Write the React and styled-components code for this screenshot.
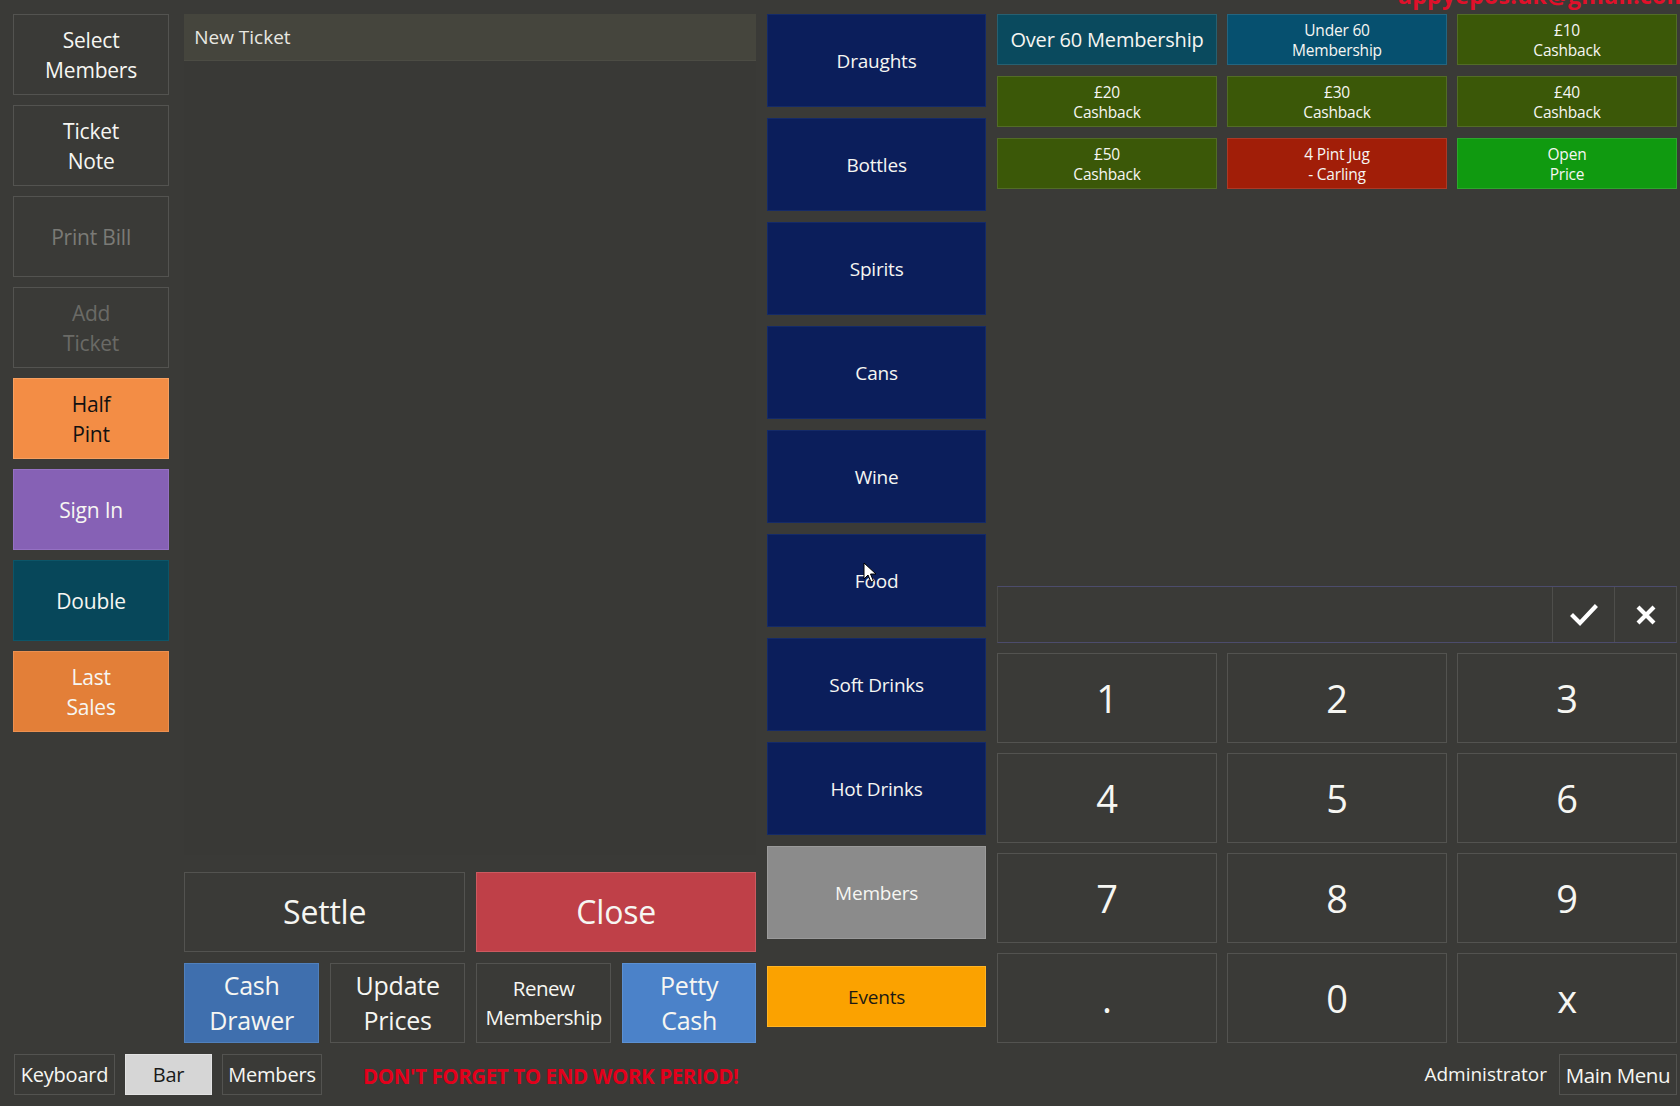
import React from "react";
import styled, { createGlobalStyle } from "styled-components";

const Global = createGlobalStyle`
  html, body { margin: 0; padding: 0; background: #3a3a37; }
  body { font-family: "Open Sans", "Noto Sans", sans-serif; }
  * { box-sizing: border-box; }
`;

const Page = styled.div`
  position: relative;
  width: 1680px;
  height: 1106px;
  overflow: hidden;
  background: #3a3a37;
  color: #f6f6f2;
  padding: 14px 3px 0 13px;
  display: flex;
  flex-direction: column;
`;

const Main = styled.div`
  display: flex;
  gap: 11px;
  height: 1029px;
`;

const Btn = styled.div`
  display: flex;
  align-items: center;
  justify-content: center;
  text-align: center;
  background: ${(p) => p.$bg || "#3a3a37"};
  color: ${(p) => p.$fg || "#f6f6f2"};
  border: 1px solid ${(p) => p.$bd || "rgba(255,255,255,0.13)"};
  font-size: ${(p) => p.$fs || 21}px;
  line-height: ${(p) => p.$lh || 30}px;
  height: ${(p) => (p.$h ? p.$h + "px" : "auto")};
  white-space: pre-line;
  letter-spacing: ${(p) => (p.$ls !== undefined ? p.$ls : -0.2)}px;
`;

const LeftCol = styled.div`
  width: 157px;
  margin-right: 4px;
  display: flex;
  flex-direction: column;
  gap: 10px;
`;

const TicketCol = styled.div`
  width: 572px;
  display: flex;
  flex-direction: column;
`;

const TicketHeader = styled.div`
  height: 47px;
  background: #45453d;
  border-bottom: 1px solid #4c4c44;
  padding: 0 0 0 10px;
  display: flex;
  align-items: center;
  font-size: 19px;
  color: #e8e8e2;
`;

const TicketBody = styled.div`
  flex: 1;
  background: #393936;
  margin-bottom: 17px;
`;

const ActionRow = styled.div`
  display: grid;
  grid-template-columns: ${(p) => p.$cols};
  gap: 11px;
  height: 80px;
  margin-top: ${(p) => p.$mt || 0}px;
`;

const CatCol = styled.div`
  width: 220px;
  display: flex;
  flex-direction: column;
  gap: 11px;
`;

const RightCol = styled.div`
  width: 681px;
  display: flex;
  flex-direction: column;
`;

const ProductGrid = styled.div`
  display: grid;
  grid-template-columns: repeat(3, 220px);
  grid-auto-rows: 51px;
  column-gap: 10px;
  row-gap: 11px;
`;

const InputBar = styled.div`
  margin-top: 397px;
  height: 57px;
  display: flex;
  border-top: 1px solid #4c4c6c;
  border-bottom: 1px solid #4c4c6c;
  border-left: 1px solid rgba(255, 255, 255, 0.08);
  border-right: 1px solid rgba(255, 255, 255, 0.1);
`;

const InputField = styled.div`
  flex: 1;
`;

const IconCell = styled.div`
  width: 62px;
  display: flex;
  align-items: center;
  justify-content: center;
  border-left: 1px solid rgba(255, 255, 255, 0.1);
`;

const Keypad = styled.div`
  margin-top: 10px;
  display: grid;
  grid-template-columns: repeat(3, 220px);
  grid-auto-rows: 90px;
  column-gap: 10px;
  row-gap: 10px;
`;

const Bottom = styled.div`
  margin-top: 11px;
  height: 41px;
  display: flex;
  align-items: stretch;
  gap: 10px;
  padding-left: 1px;
`;

const TabBtn = styled(Btn)`
  font-size: ${(p) => p.$fs || 20}px;
  padding: 0;
  width: ${(p) => p.$w}px;
  white-space: nowrap;
`;

const Warning = styled.div`
  margin-left: 31px;
  display: flex;
  align-items: center;
  color: #e3001b;
  font-weight: 700;
  font-size: 20.5px;
  letter-spacing: -0.4px;
  padding-top: 2px;
  font-family: "Open Sans", sans-serif;
`;

const Spacer = styled.div`
  flex: 1;
`;

const UserName = styled.div`
  display: flex;
  align-items: center;
  font-size: 19px;
  margin-right: 2px;
  padding-bottom: 2px;
`;

const TopNote = styled.div`
  position: absolute;
  top: -16px;
  left: 1398px;
  color: #e0102a;
  font-weight: 700;
  font-size: 23px;
  line-height: 23px;
  letter-spacing: 0.3px;
  white-space: nowrap;
`;

const Cursor = styled.svg`
  position: absolute;
  left: 863px;
  top: 562px;
`;

const leftButtons = [
  { t: "Select\nMembers" },
  { t: "Ticket\nNote" },
  { t: "Print Bill", fg: "#7a7a76" },
  { t: "Add\nTicket", fg: "#6a6a66" },
  { t: "Half\nPint", bg: "#f38d45", fg: "#111", bd: "#f7a060" },
  { t: "Sign In", bg: "#8661b5", bd: "#9571c3" },
  { t: "Double", bg: "#07475a", bd: "#0c5568" },
  { t: "Last\nSales", bg: "#e37f38", bd: "#ec9050" },
];

const categories = [
  "Draughts",
  "Bottles",
  "Spirits",
  "Cans",
  "Wine",
  "Food",
  "Soft Drinks",
  "Hot Drinks",
];

const products = [
  { t: "Over 60 Membership", bg: "#0a4a5e", fs: 20, lh: 26 },
  { t: "Under 60\nMembership", bg: "#06506f" },
  { t: "£10\nCashback", bg: "#3b5808" },
  { t: "£20\nCashback", bg: "#3b5808" },
  { t: "£30\nCashback", bg: "#3b5808" },
  { t: "£40\nCashback", bg: "#3b5808" },
  { t: "£50\nCashback", bg: "#3b5808" },
  { t: "4 Pint Jug\n- Carling", bg: "#a11e08" },
  { t: "Open\nPrice", bg: "#109a10" },
];

const keys = ["1", "2", "3", "4", "5", "6", "7", "8", "9", ".", "0", "x"];

export default function App() {
  return (
    <Page>
      <Global />
      <TopNote>appyepos.uk@gmail.com</TopNote>
      <Main>
        <LeftCol>
          {leftButtons.map((b) => (
            <Btn key={b.t} $h={81} $bg={b.bg} $fg={b.fg} $bd={b.bd}>
              {b.t}
            </Btn>
          ))}
        </LeftCol>

        <TicketCol>
          <TicketHeader>New Ticket</TicketHeader>
          <TicketBody />
          <ActionRow $cols="281px 280px">
            <Btn $fs={32} $lh={40}>Settle</Btn>
            <Btn $fs={32} $lh={40} $bg="#bf4048" $bd="#cc5a60">
              Close
            </Btn>
          </ActionRow>
          <ActionRow $cols="135px 135px 135px 134px" $mt={11}>
            <Btn $fs={25} $lh={35} $bg="#3f6fae" $bd="#5080bc">
              {"Cash\nDrawer"}
            </Btn>
            <Btn $fs={25} $lh={35}>{"Update\nPrices"}</Btn>
            <Btn $fs={20.5} $lh={29} $ls={-0.5}>
              {"Renew\nMembership"}
            </Btn>
            <Btn $fs={25} $lh={35} $bg="#4b82c9" $bd="#5b90d2">
              {"Petty\nCash"}
            </Btn>
          </ActionRow>
        </TicketCol>

        <CatCol>
          {categories.map((c) => (
            <Btn key={c} $h={93} $fs={19} $bg="#0b1e5b" $bd="#142a68">
              {c}
            </Btn>
          ))}
          <Btn $h={93} $fs={19} $bg="#8b8b8b" $bd="#9a9a9a">
            Members
          </Btn>
          <Btn
            $h={61}
            $fs={19}
            $bg="#fba200"
            $fg="#1c1a14"
            $bd="#ffb424"
            style={{ marginTop: "16px" }}
          >
            Events
          </Btn>
        </CatCol>

        <RightCol>
          <ProductGrid>
            {products.map((p) => (
              <Btn
                key={p.t}
                $bg={p.bg}
                $fs={p.fs || 15.5}
                $lh={p.lh || 20}
                $bd="rgba(255,255,255,0.12)"
              >
                {p.t}
              </Btn>
            ))}
          </ProductGrid>
          <InputBar>
            <InputField />
            <IconCell>
              <svg width="28" height="24" viewBox="0 0 28 24">
                <path
                  d="M3 13 L10 20 L25 4"
                  fill="none"
                  stroke="#fff"
                  strokeWidth="4.2"
                  strokeLinecap="square"
                />
              </svg>
            </IconCell>
            <IconCell>
              <svg width="24" height="24" viewBox="0 0 24 24">
                <path
                  d="M4 4 L20 20 M20 4 L4 20"
                  fill="none"
                  stroke="#fff"
                  strokeWidth="4.2"
                />
              </svg>
            </IconCell>
          </InputBar>
          <Keypad>
            {keys.map((k) => (
              <Btn key={k} $fs={38} $lh={44}>
                {k}
              </Btn>
            ))}
          </Keypad>
        </RightCol>
      </Main>

      <Bottom>
        <TabBtn $w={101}>Keyboard</TabBtn>
        <TabBtn $w={87} $bg="#d6d6d6" $fg="#1a1a1a" $bd="#e2e2e2">
          Bar
        </TabBtn>
        <TabBtn $w={100}>Members</TabBtn>
        <Warning>DON'T FORGET TO END WORK PERIOD!</Warning>
        <Spacer />
        <UserName>Administrator</UserName>
        <TabBtn $w={118} $fs={20.5} $ls={-0.4}>
          Main Menu
        </TabBtn>
      </Bottom>

      <Cursor width="14" height="22" viewBox="0 0 14 22">
        <path
          d="M1 1 L1 17 L5 13 L8 20 L10.5 19 L7.5 12 L13 12 Z"
          fill="#fff"
          stroke="#000"
          strokeWidth="1"
          strokeLinejoin="round"
        />
      </Cursor>
    </Page>
  );
}
